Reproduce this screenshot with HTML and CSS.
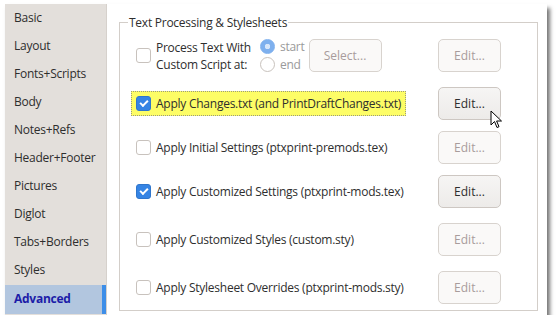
FILE: index.html
```html
<!DOCTYPE html>
<html lang="en">
<head>
    <meta charset="UTF-8">
    <title>PTXprint - Advanced</title>
    <link rel="stylesheet" href="styles.css">
</head>
<body>
    <div class="window">
        <ul class="sidebar">
            <li>Basic</li>
            <li>Layout</li>
            <li>Fonts+Scripts</li>
            <li>Body</li>
            <li>Notes+Refs</li>
            <li>Header+Footer</li>
            <li>Pictures</li>
            <li>Diglot</li>
            <li>Tabs+Borders</li>
            <li>Styles</li>
            <li class="active">Advanced</li>
        </ul>

        <div class="content">
            <fieldset class="frame">
                <legend>Text Processing &amp; Stylesheets</legend>

                <div class="row first">
                    <span class="check"></span>
                    <span class="label two-line">Process Text With<br>Custom Script at:</span>
                    <div class="radios">
                        <div class="radio-item"><span class="radio on"></span><span>start</span></div>
                        <div class="radio-item"><span class="radio"></span><span>end</span></div>
                    </div>
                    <button class="btn select" disabled>Select...</button>
                    <button class="btn edit" disabled>Edit...</button>
                </div>

                <div class="row">
                    <div class="focus">
                        <span class="check checked"></span>
                        <span class="label">Apply Changes.txt (and PrintDraftChanges.txt)</span>
                    </div>
                    <button class="btn edit">Edit...</button>
                </div>

                <div class="row tight">
                    <span class="check"></span>
                    <span class="label">Apply Initial Settings (ptxprint-premods.tex)</span>
                    <button class="btn edit" disabled>Edit...</button>
                </div>

                <div class="row tight">
                    <span class="check checked"></span>
                    <span class="label">Apply Customized Settings (ptxprint-mods.tex)</span>
                    <button class="btn edit">Edit...</button>
                </div>

                <div class="row">
                    <span class="check"></span>
                    <span class="label">Apply Customized Styles (custom.sty)</span>
                    <button class="btn edit" disabled>Edit...</button>
                </div>

                <div class="row">
                    <span class="check"></span>
                    <span class="label">Apply Stylesheet Overrides (ptxprint-mods.sty)</span>
                    <button class="btn edit" disabled>Edit...</button>
                </div>
            </fieldset>
        </div>

        <svg class="cursor" width="14" height="20" viewBox="0 0 14 20">
            <path d="M1 1 L1 15 L4.5 11.5 L7 17.5 L9 16.7 L6.6 11 L11.5 11 Z" fill="#fff" stroke="#000" stroke-width="1" stroke-linejoin="miter"/>
        </svg>
    </div>
</body>
</html>
```

FILE: styles.css
```css
body {
    margin: 0;
    padding: 4px 0 0 5px;
    background: #fff;
    font-family: "Open Sans", "Noto Sans", sans-serif;
    font-size: 12px;
    letter-spacing: -0.25px;
    color: #2e2e2e;
}
.window {
    position: relative;
    display: flex;
    width: 542px;
    height: 311px;
    background: #fff;
    box-shadow: 3px 4px 4px rgba(0, 0, 0, 0.55);
}
.sidebar {
    list-style: none;
    margin: 0;
    padding: 0;
    width: 101px;
    background: #e3dfdb;
    border-right: 1px solid #d6d1cc;
}
.sidebar li {
    height: 28px;
    line-height: 28px;
    padding-left: 9px;
    color: #2e2e2e;
}
.sidebar li.active {
    margin-top: 1px;
    height: 29px;
    background: #b2c6df;
    color: #1c1ca8;
    font-weight: bold;
    box-shadow: inset -4px 0 0 #3d8ee8;
}
.content {
    flex: 1;
    padding: 10px 9px 4px 12px;
}
.frame {
    margin: 0;
    height: 100%;
    box-sizing: border-box;
    border: 1px solid #d3cec9;
    padding: 8px 36px 0 16px;
}
.frame legend {
    margin-left: -8px;
    padding: 0 1px;
    color: #2e2e2e;
}
.row {
    display: flex;
    align-items: center;
    height: 33px;
    margin-top: 15px;
}
.row.first {
    margin-top: 0;
}
.row.tight {
    margin-top: 11px;
}
.check {
    flex: none;
    width: 13px;
    height: 13px;
    border: 1px solid #c8c2bd;
    border-radius: 3px;
    background: #fff;
    position: relative;
}
.check.checked {
    background: #3584e4;
    border-color: #2f76cc;
}
.check.checked::after {
    content: "";
    position: absolute;
    left: 3px;
    top: 1px;
    width: 6px;
    height: 3px;
    border-left: 2px solid #fff;
    border-bottom: 2px solid #fff;
    transform: translate(0, 2px) rotate(-45deg);
}
.label {
    margin-left: 5px;
    white-space: nowrap;
}
.label.two-line {
    line-height: 17px;
}
.focus {
    display: flex;
    align-items: center;
    margin-left: -5px;
    padding: 3px 4px 3px 4px;
    background: #fdfd66;
    border: 1px dotted #9a9a80;
}
.radios {
    margin-left: 9px;
    display: flex;
    flex-direction: column;
    gap: 2px;
    color: #9a9a9a;
}
.radio-item {
    display: flex;
    align-items: center;
    gap: 5px;
    height: 16px;
}
.radio {
    width: 13px;
    height: 13px;
    border: 1px solid #c8c2bd;
    border-radius: 50%;
    background: #fff;
    box-sizing: content-box;
}
.radio.on {
    background: radial-gradient(circle, #d7e6fa 0 2.5px, #7eb0ee 3px);
    border-color: #7eb0ee;
}
.btn {
    font: inherit;
    height: 33px;
    border: 1px solid #cdc7c2;
    border-radius: 5px;
    background: linear-gradient(#f6f5f4, #edebe9);
    color: #2e2e2e;
    padding: 0;
}
.btn:disabled {
    background: #faf9f8;
    border-color: #d8d3ce;
    color: #a89c9c;
}
.btn.select {
    margin-left: 4px;
    width: 73px;
}
.btn.edit {
    margin-left: auto;
    width: 63px;
}
.cursor {
    position: absolute;
    left: 485px;
    top: 106px;
}
```
